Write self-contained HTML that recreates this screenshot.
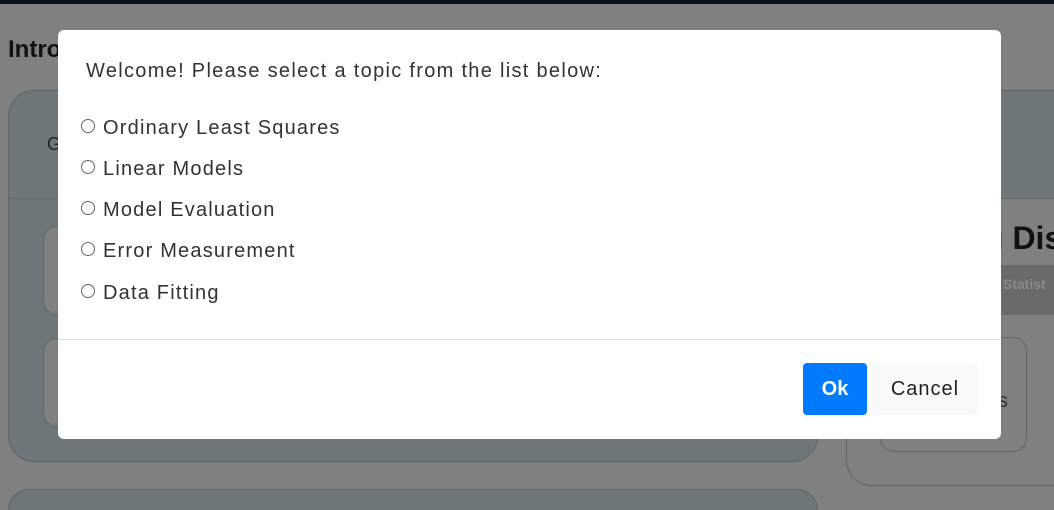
<!DOCTYPE html>
<html><head><style>
*{box-sizing:border-box;margin:0;padding:0}
html,body{width:1054px;height:510px;overflow:hidden}
body{background:#808080;font-family:"Liberation Sans",sans-serif;color:#212529;position:relative}
.abs{position:absolute}
.top{left:0;top:0;width:1054px;height:4px;background:#06101c}
.card{border:1px solid #5f6568;background:#6e767a}
.modal{left:58px;top:30px;width:943px;height:409px;background:#fff;border-radius:6px}
.opt{position:absolute;left:23px;font-size:20px;color:#333;letter-spacing:1.2px;white-space:nowrap}
.opt span{display:inline-block;width:14px;height:14px;border:1px solid #666;border-radius:50%;margin-right:8px;vertical-align:1px}
</style></head><body>
<div class="abs top"></div>
<div class="abs" style="left:8px;top:36px;font-size:24px;font-weight:bold;color:#111">Intro</div>
<div class="abs card" style="left:8px;top:90px;width:810px;height:372px;border-radius:26px"></div>
<div class="abs" style="left:8px;top:198px;width:810px;height:1px;background:#5f6568"></div>
<div class="abs" style="left:47px;top:134px;font-size:18px;color:#222">G</div>
<div class="abs" style="left:43px;top:226px;width:100px;height:89px;border:1px solid #5f6568;border-radius:14px;background:#808080"></div>
<div class="abs" style="left:43px;top:338px;width:100px;height:89px;border:1px solid #5f6568;border-radius:14px;background:#808080"></div>
<div class="abs card" style="left:8px;top:489px;width:810px;height:21px;border-radius:26px 26px 0 0;border-bottom:none"></div>
<div class="abs card" style="left:846px;top:90px;width:208px;height:110px;border-radius:26px 0 0 0;border-right:none"></div>
<div class="abs card" style="left:846px;top:198px;width:208px;height:288px;border-radius:0 0 0 26px;background:#808080;border-right:none"></div>
<div class="abs" style="left:984px;top:220px;font-size:32px;font-weight:bold;color:#111;white-space:nowrap">g Dis</div>
<div class="abs" style="left:960px;top:265px;width:94px;height:50px;border-radius:18px 0 0 18px;background:#6a6a6a"></div>
<div class="abs" style="left:1003px;top:276px;font-size:14px;font-weight:bold;color:#8a8a8a">Statist</div>
<div class="abs" style="left:880px;top:337px;width:147px;height:115px;border:1px solid #5f6568;border-radius:14px"></div>
<div class="abs" style="left:998px;top:390px;font-size:20px;color:#333">s</div>
<div class="abs modal">
<div class="abs" style="left:28px;top:30px;font-size:20px;color:#333;letter-spacing:1.3px;white-space:nowrap">Welcome! Please select a topic from the list below:</div>
<div class="opt" style="top:87px"><span></span>Ordinary Least Squares</div>
<div class="opt" style="top:128px"><span></span>Linear Models</div>
<div class="opt" style="top:169px"><span></span>Model Evaluation</div>
<div class="opt" style="top:210px"><span></span>Error Measurement</div>
<div class="opt" style="top:252px"><span></span>Data Fitting</div>
<div class="abs" style="left:0;top:309px;width:943px;height:1px;background:#dee2e6"></div>
<div class="abs" style="left:745px;top:333px;width:64px;height:52px;background:#007bff;border-radius:4px;color:#fff;font-size:20px;font-weight:bold;text-align:center;line-height:52px">Ok</div>
<div class="abs" style="left:814px;top:333px;width:106px;height:52px;background:#f8f9fa;border-radius:4px;color:#222;font-size:20px;letter-spacing:1px;text-align:center;line-height:52px">Cancel</div>
</div>
</body></html>
